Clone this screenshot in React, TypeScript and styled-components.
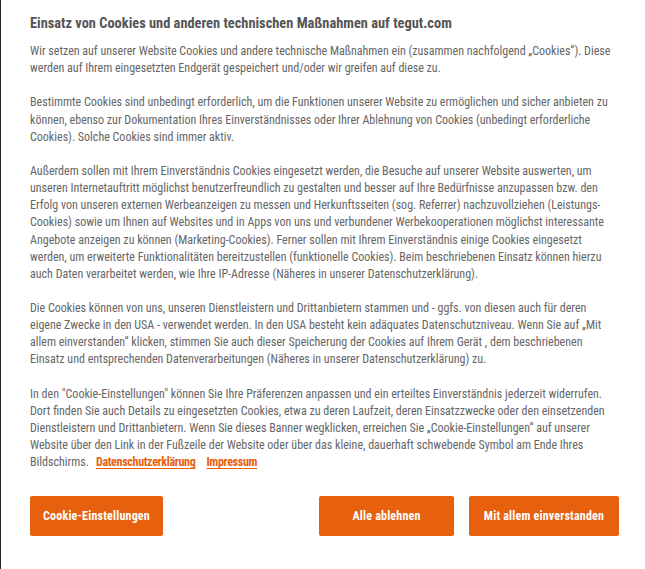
import React from "react";
import styled, { createGlobalStyle } from "styled-components";

const GlobalStyle = createGlobalStyle`
  html, body { margin: 0; padding: 0; background: #fff; }
  * { box-sizing: border-box; }
`;

const Page = styled.div`
  min-height: 100vh;
  border-left: 1px solid #262626;
  padding: 14px 26px 20px 29px;
  font-family: "Roboto Condensed", "Liberation Sans", sans-serif;
  color: #666;
`;

const Title = styled.h1`
  margin: 0 0 9px;
  font-size: 14.4px;
  line-height: 20px;
  font-weight: 700;
  color: #555;
`;

const Body = styled.div`
  display: flex;
  flex-direction: column;
  gap: 17.14px;
`;

const Para = styled.p`
  margin: 0;
  font-size: 12px;
  line-height: 1.428571;
`;

const Links = styled.span`
  display: inline-flex;
  gap: 11px;
  margin-left: 7px;
`;

const Link = styled.a`
  color: #e6600d;
  font-weight: 700;
  letter-spacing: -0.3px;
  text-decoration: underline;
  text-underline-offset: 2px;
  cursor: pointer;
`;

const Actions = styled.div`
  display: flex;
  justify-content: space-between;
  align-items: center;
  margin-top: 25px;
`;

const Group = styled.div`
  display: flex;
  gap: 15px;
`;

const Button = styled.button<{ $w: number }>`
  width: ${(p) => p.$w}px;
  height: 40px;
  border: 0;
  border-radius: 2px;
  background: #e6600d;
  color: #fff;
  font-family: "Roboto Condensed", "Liberation Sans", sans-serif;
  font-size: 12px;
  font-weight: 700;
  letter-spacing: 0.2px;
  cursor: pointer;
  padding: 0;
`;

export default function App() {
  return (
    <>
      <GlobalStyle />
      <Page>
        <Title>Einsatz von Cookies und anderen technischen Maßnahmen auf tegut.com</Title>
        <Body>
          <Para>
            Wir setzen auf unserer Website Cookies und andere technische Maßnahmen ein (zusammen nachfolgend „Cookies“). Diese werden auf Ihrem eingesetzten Endgerät gespeichert und/oder wir greifen auf diese zu.
          </Para>
          <Para>
            Bestimmte Cookies sind unbedingt erforderlich, um die Funktionen unserer Website zu ermöglichen und sicher anbieten zu können, ebenso zur Dokumentation Ihres Einverständnisses oder Ihrer Ablehnung von Cookies (unbedingt erforderliche Cookies). Solche Cookies sind immer aktiv.
          </Para>
          <Para>
            Außerdem sollen mit Ihrem Einverständnis Cookies eingesetzt werden, die Besuche auf unserer Website auswerten, um unseren Internetauftritt möglichst benutzerfreundlich zu gestalten und besser auf Ihre Bedürfnisse anzupassen bzw. den Erfolg von unseren externen Werbeanzeigen zu messen und Herkunftsseiten (sog. Referrer) nachzuvollziehen (Leistungs-Cookies) sowie um Ihnen auf Websites und in Apps von uns und verbundener Werbekooperationen möglichst interessante Angebote anzeigen zu können (Marketing-Cookies). Ferner sollen mit Ihrem Einverständnis einige Cookies eingesetzt werden, um erweiterte Funktionalitäten bereitzustellen (funktionelle Cookies). Beim beschriebenen Einsatz können hierzu auch Daten verarbeitet werden, wie Ihre IP-Adresse (Näheres in unserer Datenschutzerklärung).
          </Para>
          <Para>
            Die Cookies können von uns, unseren Dienstleistern und Drittanbietern stammen und - ggfs. von diesen auch für deren eigene Zwecke in den USA - verwendet werden. In den USA besteht kein adäquates Datenschutzniveau. Wenn Sie auf „Mit allem einverstanden“ klicken, stimmen Sie auch dieser Speicherung der Cookies auf Ihrem Gerät , dem beschriebenen Einsatz und entsprechenden Datenverarbeitungen (Näheres in unserer Datenschutzerklärung) zu.
          </Para>
          <Para>
            In den "Cookie-Einstellungen" können Sie Ihre Präferenzen anpassen und ein erteiltes Einverständnis jederzeit widerrufen. Dort finden Sie auch Details zu eingesetzten Cookies, etwa zu deren Laufzeit, deren Einsatzzwecke oder den einsetzenden Dienstleistern und Drittanbietern. Wenn Sie dieses Banner wegklicken, erreichen Sie „Cookie-Einstellungen“ auf unserer Website über den Link in der Fußzeile der Website oder über das kleine, dauerhaft schwebende Symbol am Ende Ihres Bildschirms.
            <Links>
              <Link>Datenschutzerklärung</Link>
              <Link>Impressum</Link>
            </Links>
          </Para>
        </Body>
        <Actions>
          <Button $w={133}>Cookie-Einstellungen</Button>
          <Group>
            <Button $w={135}>Alle ablehnen</Button>
            <Button $w={150}>Mit allem einverstanden</Button>
          </Group>
        </Actions>
      </Page>
    </>
  );
}
